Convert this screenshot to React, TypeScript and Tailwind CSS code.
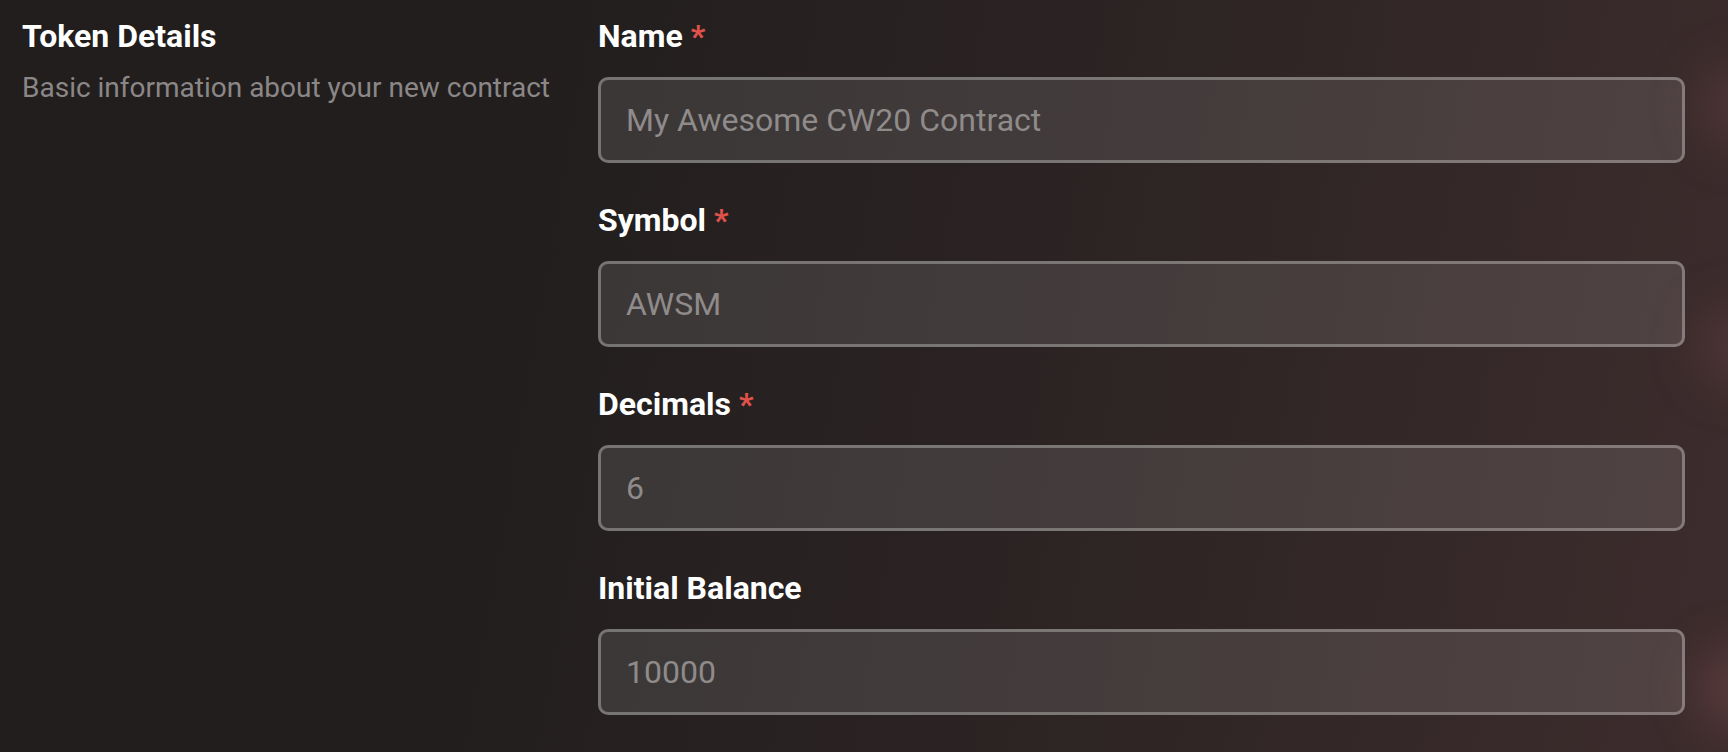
import React from "react";

const fields = [
  { label: "Name", placeholder: "My Awesome CW20 Contract", required: true },
  { label: "Symbol", placeholder: "AWSM", required: true },
  { label: "Decimals", placeholder: "6", required: true },
  { label: "Initial Balance", placeholder: "10000", required: false },
];

export default function App() {
  return (
    <main className="relative min-h-screen w-full overflow-hidden bg-[linear-gradient(100deg,#221e1e_28%,#2b2323_58%,#3d2c2d_100%)] font-['Roboto',sans-serif]">
      {/* soft glows peeking in from the right edge */}
      <div className="pointer-events-none absolute right-[-50px] top-[66px] h-[80px] w-[80px] rounded-full bg-[#6b4545]/40 blur-xl" />
      <div className="pointer-events-none absolute right-[-50px] top-[306px] h-[80px] w-[80px] rounded-full bg-[#6b4545]/40 blur-xl" />
      <div className="pointer-events-none absolute right-[-50px] top-[648px] h-[80px] w-[80px] rounded-full bg-[#7a4c4a]/50 blur-xl" />

      <section className="relative flex pl-[22px] pr-[43px]">
        <div className="w-[576px] shrink-0 pt-[12px]">
          <h2 className="text-[32px] font-bold leading-[49px] text-white">Token Details</h2>
          <p className="mt-[6px] text-[28px] leading-[42px] text-[#8b8787]">
            Basic information about your new contract
          </p>
        </div>

        <div className="flex flex-1 flex-col gap-[33px] pt-[12px]">
          {fields.map((f) => (
            <div key={f.label} className="flex flex-col gap-[16px]">
              <label className="text-[32px] font-bold leading-[49px] text-white">
                {f.label}
                {f.required && <span className="text-[#e0524a]"> *</span>}
              </label>
              <input
                type="text"
                placeholder={f.placeholder}
                className="h-[86px] w-full rounded-[10px] border-[3px] border-white/30 bg-white/[0.11] px-[25px] text-[32px] text-white outline-none placeholder:text-[#8f8b8a]"
              />
            </div>
          ))}
        </div>
      </section>
    </main>
  );
}
